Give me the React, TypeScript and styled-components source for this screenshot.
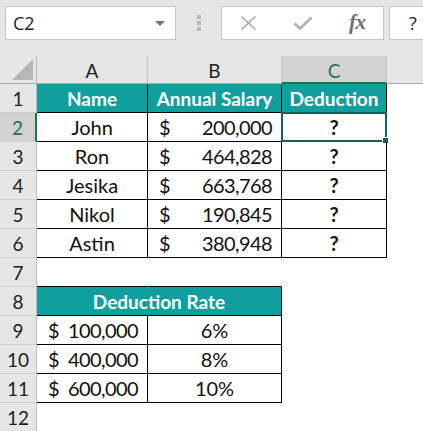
import React from "react";
import styled, { createGlobalStyle, css } from "styled-components";

const Global = createGlobalStyle`
  html, body { margin: 0; padding: 0; }
  body { background: #ffffff; font-family: "Lato", "Open Sans", sans-serif; overflow: hidden; }
`;

const TEAL = "#0fa09d";
const GREEN = "#217346";
const SEL = "#1f5c57";
const HEAD_BG = "#e6e6e6";
const HEAD_SEL = "#d2d2d2";

const Page = styled.div`
  width: 423px;
  height: 431px;
  overflow: hidden;
  background: #fff;
`;

const Toolbar = styled.div`
  height: 56px;
  box-sizing: border-box;
  background: ${HEAD_BG};
  display: flex;
  align-items: flex-start;
  padding: 6px 0 0 5px;
  font-family: "Open Sans", "Noto Sans", sans-serif;
`;

const NameBox = styled.div`
  width: 171px;
  height: 34px;
  box-sizing: border-box;
  border: 1px solid #c6c6c6;
  background: #fff;
  display: flex;
  align-items: center;
  justify-content: space-between;
  padding: 0 10px 0 7px;
  font-size: 18px;
  color: #222;
`;

const Caret = styled.span`
  width: 0;
  height: 0;
  border-left: 5px solid transparent;
  border-right: 5px solid transparent;
  border-top: 5px solid #7a7a7a;
  margin-top: 1px;
`;

const Dots = styled.div`
  width: 45px;
  height: 34px;
  display: flex;
  flex-direction: column;
  align-items: center;
  justify-content: center;
  gap: 2px;
`;

const Dot = styled.span`
  width: 4px;
  height: 4px;
  background: #b9b9b9;
`;

const FxBox = styled.div`
  width: 163px;
  height: 34px;
  box-sizing: border-box;
  border: 1px solid #c6c6c6;
  background: #fff;
  display: flex;
  align-items: center;
  padding-left: 17px;
`;

const FxButton = styled.div<{ $w: number; $start?: boolean }>`
  width: ${(p) => p.$w}px;
  height: 32px;
  display: flex;
  align-items: center;
  justify-content: ${(p) => (p.$start ? "flex-start" : "center")};
`;

const FxLabel = styled.span`
  font-family: "Liberation Serif", "DejaVu Serif", serif;
  font-style: italic;
  font-weight: bold;
  font-size: 21px;
  color: #707070;
  letter-spacing: -0.5px;
  margin-top: -2px;
`;

const FormulaInput = styled.div`
  flex: 1;
  height: 34px;
  margin-left: 5px;
  box-sizing: border-box;
  border: 1px solid #c6c6c6;
  border-right: none;
  background: #fff;
  display: flex;
  align-items: center;
  padding-left: 19px;
  font-size: 18px;
  color: #222;
`;

const Sheet = styled.div`
  display: grid;
  grid-template-columns: 37px 111px 134px 105px 1fr;
  grid-template-rows: 28px repeat(12, 29px);
  font-family: "Lato", "Open Sans", sans-serif;
`;

const Corner = styled.div`
  background: ${HEAD_BG};
  border-right: 1px solid #bdbdbd;
  border-bottom: 1px solid #a9a9a9;
  box-sizing: border-box;
  position: relative;
`;

const Triangle = styled.span`
  position: absolute;
  right: 3px;
  bottom: 3px;
  width: 0;
  height: 0;
  border-left: 21px solid transparent;
  border-bottom: 21px solid #b7b7b7;
`;

const ColHead = styled.div<{ $sel?: boolean; $last?: boolean }>`
  background: ${(p) => (p.$sel ? HEAD_SEL : HEAD_BG)};
  box-sizing: border-box;
  border-right: ${(p) => (p.$last ? "none" : "1px solid #c3c3c3")};
  border-bottom: ${(p) => (p.$sel ? `2px solid ${GREEN}` : "1px solid #a9a9a9")};
  display: flex;
  align-items: center;
  justify-content: center;
  font-size: 19px;
  padding-top: 2px;
  color: ${(p) => (p.$sel ? GREEN : "#222")};
`;

const RowHead = styled.div<{ $sel?: boolean }>`
  background: ${(p) => (p.$sel ? HEAD_SEL : HEAD_BG)};
  box-sizing: border-box;
  border-right: ${(p) => (p.$sel ? `2px solid ${GREEN}` : "1px solid #bdbdbd")};
  border-bottom: 1px solid #cfcfcf;
  display: flex;
  align-items: center;
  justify-content: center;
  font-size: 19px;
  color: ${(p) => (p.$sel ? GREEN : "#222")};
`;

type Edge = { r?: boolean; b?: boolean };

const Cell = styled.div<{
  $edge?: Edge;
  $head?: boolean;
  $span?: number;
  $align?: "center" | "split";
  $bold?: boolean;
}>`
  box-sizing: border-box;
  position: relative;
  display: flex;
  align-items: center;
  font-size: 20px;
  color: #111;
  justify-content: center;
  white-space: nowrap;
  border-right: ${(p) => (p.$edge?.r ? "1px solid #000" : "1px solid transparent")};
  border-bottom: ${(p) => (p.$edge?.b ? "1px solid #000" : "1px solid transparent")};
  ${(p) => p.$span && css`grid-column: span ${p.$span};`}
  ${(p) =>
    p.$head &&
    css`
      background: ${TEAL};
      color: #fff;
      font-weight: bold;
      font-size: 19px;
    `}
  ${(p) => p.$bold && css`font-weight: bold;`}
  ${(p) =>
    p.$align === "split" &&
    css`
      justify-content: space-between;
      padding: 0 9px 0 11px;
    `}
`;

const Amount = styled.span`
  letter-spacing: -0.6px;
`;

const Selection = styled.span`
  position: absolute;
  left: -1px;
  top: -1px;
  right: -1px;
  bottom: -1px;
  border: 2px solid ${SEL};
  pointer-events: none;
`;

const Handle = styled.span`
  position: absolute;
  right: -4px;
  bottom: -4px;
  width: 5px;
  height: 5px;
  background: ${SEL};
  border: 1px solid #fff;
`;

const people = [
  { name: "John", salary: "200,000" },
  { name: "Ron", salary: "464,828" },
  { name: "Jesika", salary: "663,768" },
  { name: "Nikol", salary: "190,845" },
  { name: "Astin", salary: "380,948" },
];

const rates = [
  { amount: "100,000", rate: "6%" },
  { amount: "400,000", rate: "8%" },
  { amount: "600,000", rate: "10%" },
];

const XIcon = () => (
  <svg width="17" height="16" viewBox="0 0 17 16">
    <path d="M1.5 1.5 L15.5 14.5 M15.5 1.5 L1.5 14.5" stroke="#a8a8a8" strokeWidth="1.6" fill="none" />
  </svg>
);

const CheckIcon = () => (
  <svg width="20" height="15" viewBox="0 0 20 15">
    <path d="M1.5 7.5 L7 12.5 L18.5 1.5" stroke="#b4b4b4" strokeWidth="2.8" fill="none" />
  </svg>
);

export default function App() {
  return (
    <Page>
      <Global />
      <Toolbar>
        <NameBox>
          <span>C2</span>
          <Caret />
        </NameBox>
        <Dots>
          <Dot />
          <Dot />
          <Dot />
        </Dots>
        <FxBox>
          <FxButton $w={18}>
            <XIcon />
          </FxButton>
          <FxButton $w={92}>
            <CheckIcon />
          </FxButton>
          <FxButton $w={26} $start>
            <FxLabel>fx</FxLabel>
          </FxButton>
        </FxBox>
        <FormulaInput>?</FormulaInput>
      </Toolbar>
      <Sheet>
        <Corner>
          <Triangle />
        </Corner>
        <ColHead>A</ColHead>
        <ColHead>B</ColHead>
        <ColHead $sel>C</ColHead>
        <ColHead $last />

        <RowHead>1</RowHead>
        <Cell $head $edge={{ r: true, b: true }}>Name</Cell>
        <Cell $head $edge={{ r: true, b: true }}>Annual Salary</Cell>
        <Cell $head $edge={{ r: true, b: true }}>Deduction</Cell>
        <Cell />

        {people.map((p, i) => (
          <React.Fragment key={p.name}>
            <RowHead $sel={i === 0}>{i + 2}</RowHead>
            <Cell $edge={{ r: true, b: true }}>{p.name}</Cell>
            <Cell $edge={{ r: true, b: true }} $align="split">
              <span>$</span>
              <Amount>{p.salary}</Amount>
            </Cell>
            <Cell $edge={{ r: true, b: true }} $bold>
              ?
              {i === 0 && (
                <Selection>
                  <Handle />
                </Selection>
              )}
            </Cell>
            <Cell />
          </React.Fragment>
        ))}

        <RowHead>7</RowHead>
        <Cell $edge={{ b: true }} />
        <Cell $edge={{ b: true }} />
        <Cell />
        <Cell />

        <RowHead>8</RowHead>
        <Cell $head $span={2} $edge={{ r: true, b: true }}>
          Deduction Rate
        </Cell>
        <Cell />
        <Cell />

        {rates.map((r, i) => (
          <React.Fragment key={r.amount}>
            <RowHead>{i + 9}</RowHead>
            <Cell $edge={{ r: true, b: true }} $align="split">
              <span>$</span>
              <Amount>{r.amount}</Amount>
            </Cell>
            <Cell $edge={{ r: true, b: true }}>{r.rate}</Cell>
            <Cell />
            <Cell />
          </React.Fragment>
        ))}

        <RowHead>12</RowHead>
        <Cell />
        <Cell />
        <Cell />
        <Cell />
      </Sheet>
    </Page>
  );
}
